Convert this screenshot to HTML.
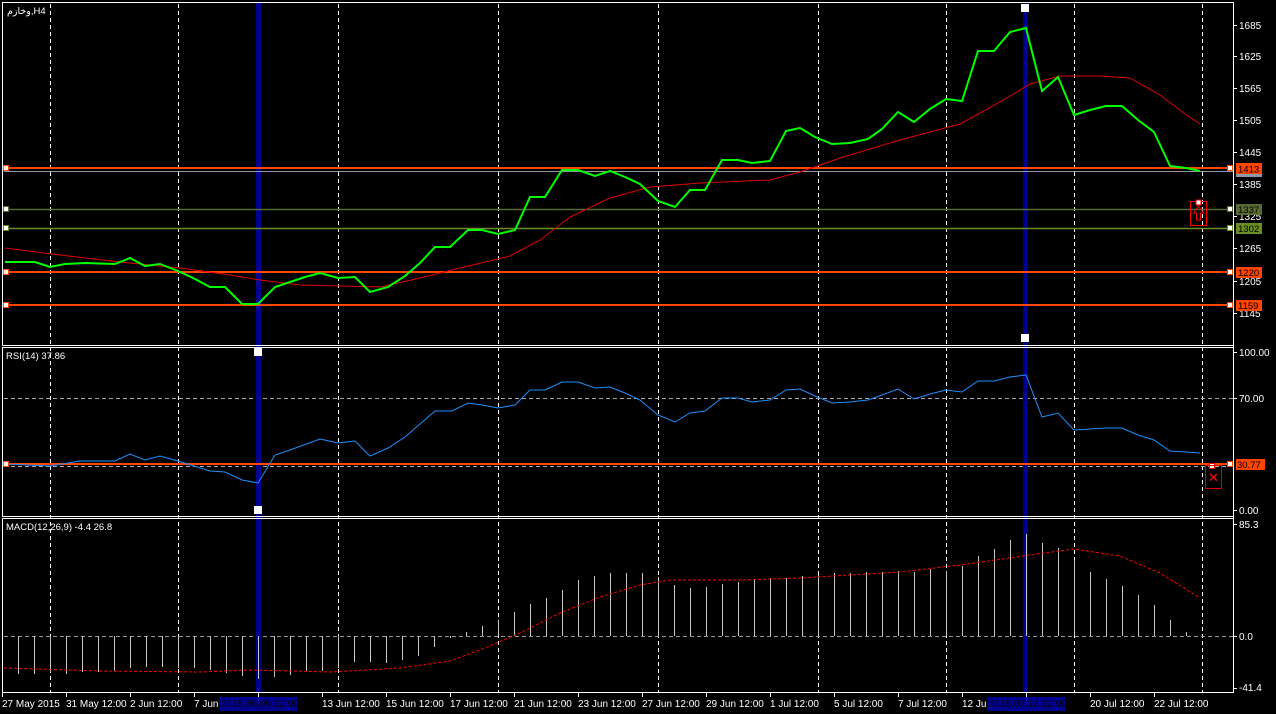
<!DOCTYPE html>
<html><head><meta charset="utf-8"><style>
html,body{margin:0;padding:0;background:#000;width:1276px;height:714px;overflow:hidden}
svg{display:block}
text{font-family:"Liberation Sans","DejaVu Sans",sans-serif;font-size:10px;fill:#fff}
.ax{font-size:10px}
.lb{font-size:9.5px;fill:#000}
</style></head><body>
<svg width="1276" height="714" viewBox="0 0 1276 714">
<rect width="1276" height="714" fill="#000"/>
<!-- vertical grid -->
<g stroke="#fff" stroke-width="1" stroke-dasharray="4,3">
<line x1="50.5" y1="4" x2="50.5" y2="692"/><line x1="178.5" y1="4" x2="178.5" y2="692"/>
<line x1="338.5" y1="4" x2="338.5" y2="692"/><line x1="498.5" y1="4" x2="498.5" y2="692"/>
<line x1="658.5" y1="4" x2="658.5" y2="692"/><line x1="818.5" y1="4" x2="818.5" y2="692"/>
<line x1="946.5" y1="4" x2="946.5" y2="692"/><line x1="1074.5" y1="4" x2="1074.5" y2="692"/>
<line x1="1202.5" y1="4" x2="1202.5" y2="692"/>
</g>
<!-- RSI & MACD horizontal dashed -->
<g stroke="#aaa" stroke-dasharray="4,3">
<line x1="4" y1="398.5" x2="1233" y2="398.5"/>
<line x1="4" y1="466.5" x2="1233" y2="466.5"/>
<line x1="4" y1="636.5" x2="1233" y2="636.5" stroke="#8899aa"/>
</g>
<!-- blue vertical lines -->
<rect x="256" y="3" width="5" height="690" fill="#000090"/>
<rect x="1023" y="3" width="5" height="690" fill="#000090"/>
<!-- pane borders -->
<g fill="none" stroke="#fff" stroke-width="1">
<rect x="2.5" y="2.5" width="1231" height="343"/>
<rect x="2.5" y="347.5" width="1231" height="169"/>
<rect x="2.5" y="518.5" width="1231" height="174"/>
</g>
<!-- horizontal level lines -->
<line x1="4" y1="171.5" x2="1233" y2="171.5" stroke="#8a9aa8" stroke-width="1"/>
<line x1="4" y1="168" x2="1233" y2="168" stroke="#ff4500" stroke-width="2"/>
<line x1="4" y1="209.5" x2="1233" y2="209.5" stroke="#556b2f" stroke-width="1.5"/>
<line x1="4" y1="228.5" x2="1233" y2="228.5" stroke="#6b8e23" stroke-width="1.5"/>
<line x1="4" y1="272" x2="1233" y2="272" stroke="#ff4500" stroke-width="2"/>
<line x1="4" y1="305" x2="1233" y2="305" stroke="#ff4500" stroke-width="2"/>
<line x1="4" y1="464" x2="1233" y2="464" stroke="#ff4500" stroke-width="2"/>
<!-- MA red -->
<polyline fill="none" stroke="#e00000" stroke-width="1" points="5,248 60,255 120,262 180,268 230,275 260,280 300,285 380,287 420,278 460,268 510,256 540,240 570,217 610,198 650,187 700,183 770,180 800,172 840,158 900,140 960,124 1000,102 1030,84 1060,76 1100,76 1130,78 1160,95 1185,114 1200,124"/>
<!-- price green -->
<polyline fill="none" stroke="#00ff00" stroke-width="2" points="5,262 35,262 50,267 65,264 85,263 115,264 130,258 145,266 160,264 178,271 195,279 210,287 225,287 242,304 258,304 275,287 290,282 305,277 320,273 338,278 355,277 370,292 388,287 405,276 420,263 435,247 450,247 468,230 482,230 498,234 515,230 530,197 545,197 562,170 578,170 595,176 610,171 625,177 640,184 658,201 675,207 690,190 705,190 722,160 738,160 752,163 770,161 786,131 800,128 815,137 832,144 850,143 868,139 882,129 898,112 914,122 930,109 946,99 962,101 978,51 994,51 1010,32 1026,28 1042,91 1058,77 1074,115 1090,110 1106,106 1122,106 1138,120 1154,132 1170,166 1186,168 1200,171"/>
<!-- RSI blue -->
<polyline fill="none" stroke="#1e90ff" stroke-width="1" points="5,464 50,466 80,461 115,461 130,454 145,460 160,456 178,461 210,471 225,472 242,480 258,483 275,455 290,450 320,439 338,443 355,441 370,456 388,448 405,437 420,424 435,411 452,411 468,403 482,405 498,408 515,405 530,390 545,390 562,382 578,382 595,388 610,387 625,393 640,400 658,415 675,422 690,413 705,411 722,398 738,398 752,402 770,400 786,390 800,389 815,396 832,403 850,402 868,400 882,395 898,389 914,399 930,394 946,390 962,392 978,381 994,381 1010,377 1026,375 1042,417 1058,413 1074,430 1090,429 1106,428 1122,428 1138,435 1154,440 1170,451 1186,452 1200,453"/>
<!-- MACD bars -->
<g stroke="#c8c8c8" stroke-width="1">
<line x1="18.5" y1="636" x2="18.5" y2="674"/><line x1="34.5" y1="636" x2="34.5" y2="674"/><line x1="50.5" y1="636" x2="50.5" y2="672"/><line x1="66.5" y1="636" x2="66.5" y2="674"/><line x1="82.5" y1="636" x2="82.5" y2="672"/><line x1="98.5" y1="636" x2="98.5" y2="672"/><line x1="114.5" y1="636" x2="114.5" y2="671"/><line x1="130.5" y1="636" x2="130.5" y2="668"/><line x1="146.5" y1="636" x2="146.5" y2="667"/><line x1="162.5" y1="636" x2="162.5" y2="667"/><line x1="178.5" y1="636" x2="178.5" y2="668"/><line x1="194.5" y1="636" x2="194.5" y2="668"/><line x1="210.5" y1="636" x2="210.5" y2="670"/><line x1="226.5" y1="636" x2="226.5" y2="673"/><line x1="242.5" y1="636" x2="242.5" y2="676"/><line x1="258.5" y1="636" x2="258.5" y2="679"/><line x1="274.5" y1="636" x2="274.5" y2="677"/><line x1="290.5" y1="636" x2="290.5" y2="675"/><line x1="306.5" y1="636" x2="306.5" y2="671"/><line x1="322.5" y1="636" x2="322.5" y2="671"/><line x1="338.5" y1="636" x2="338.5" y2="668"/><line x1="354.5" y1="636" x2="354.5" y2="662"/><line x1="370.5" y1="636" x2="370.5" y2="662"/><line x1="386.5" y1="636" x2="386.5" y2="663"/><line x1="402.5" y1="636" x2="402.5" y2="660"/><line x1="418.5" y1="636" x2="418.5" y2="656"/><line x1="434.5" y1="636" x2="434.5" y2="647"/><line x1="450.5" y1="636" x2="450.5" y2="638"/><line x1="466.5" y1="632" x2="466.5" y2="636"/>
<line x1="482.5" y1="626" x2="482.5" y2="636"/><line x1="498.5" y1="620" x2="498.5" y2="636"/><line x1="514.5" y1="612" x2="514.5" y2="636"/><line x1="530.5" y1="604" x2="530.5" y2="636"/><line x1="546.5" y1="598" x2="546.5" y2="636"/><line x1="562.5" y1="590" x2="562.5" y2="636"/><line x1="578.5" y1="580" x2="578.5" y2="636"/><line x1="594.5" y1="576" x2="594.5" y2="636"/><line x1="610.5" y1="573" x2="610.5" y2="636"/><line x1="626.5" y1="573" x2="626.5" y2="636"/><line x1="642.5" y1="573" x2="642.5" y2="636"/><line x1="658.5" y1="577" x2="658.5" y2="636"/><line x1="674.5" y1="585" x2="674.5" y2="636"/><line x1="690.5" y1="588" x2="690.5" y2="636"/><line x1="706.5" y1="587" x2="706.5" y2="636"/><line x1="722.5" y1="584" x2="722.5" y2="636"/><line x1="738.5" y1="582" x2="738.5" y2="636"/><line x1="754.5" y1="579" x2="754.5" y2="636"/><line x1="770.5" y1="578" x2="770.5" y2="636"/><line x1="786.5" y1="578" x2="786.5" y2="636"/><line x1="802.5" y1="576" x2="802.5" y2="636"/><line x1="818.5" y1="575" x2="818.5" y2="636"/><line x1="834.5" y1="573" x2="834.5" y2="636"/><line x1="850.5" y1="573" x2="850.5" y2="636"/><line x1="866.5" y1="572" x2="866.5" y2="636"/><line x1="882.5" y1="572" x2="882.5" y2="636"/><line x1="898.5" y1="571" x2="898.5" y2="636"/>
<line x1="914.5" y1="572" x2="914.5" y2="636"/><line x1="930.5" y1="569" x2="930.5" y2="636"/><line x1="946.5" y1="571" x2="946.5" y2="636"/><line x1="962.5" y1="566" x2="962.5" y2="636"/><line x1="978.5" y1="556" x2="978.5" y2="636"/><line x1="994.5" y1="549" x2="994.5" y2="636"/><line x1="1010.5" y1="540" x2="1010.5" y2="636"/><line x1="1026.5" y1="534" x2="1026.5" y2="636"/><line x1="1042.5" y1="543" x2="1042.5" y2="636"/><line x1="1058.5" y1="548" x2="1058.5" y2="636"/><line x1="1074.5" y1="560" x2="1074.5" y2="636"/><line x1="1090.5" y1="572" x2="1090.5" y2="636"/><line x1="1106.5" y1="579" x2="1106.5" y2="636"/><line x1="1122.5" y1="586" x2="1122.5" y2="636"/><line x1="1138.5" y1="595" x2="1138.5" y2="636"/><line x1="1154.5" y1="605" x2="1154.5" y2="636"/><line x1="1170.5" y1="620" x2="1170.5" y2="636"/><line x1="1186.5" y1="632" x2="1186.5" y2="636"/>
</g>
<!-- MACD signal -->
<polyline fill="none" stroke="#ff0000" stroke-width="1" stroke-dasharray="3,2" points="4,668 100,671 200,672 250,670 330,672 400,668 450,661 480,650 520,633 560,613 600,597 640,585 670,580 740,580 800,578 900,572 960,565 1030,555 1074,549 1120,556 1160,573 1200,598"/>
<!-- handles -->
<g fill="#fff" stroke="#ff4500" stroke-width="1">
<rect x="3.5" y="165.5" width="5" height="5"/><rect x="1227.5" y="165.5" width="5" height="5"/>
<rect x="3.5" y="206.5" width="5" height="5" stroke="#556b2f"/><rect x="1227.5" y="206.5" width="5" height="5" stroke="#556b2f"/>
<rect x="3.5" y="225.5" width="5" height="5" stroke="#6b8e23"/><rect x="1227.5" y="225.5" width="5" height="5" stroke="#6b8e23"/>
<rect x="3.5" y="269.5" width="5" height="5"/><rect x="1227.5" y="269.5" width="5" height="5"/>
<rect x="3.5" y="302.5" width="5" height="5"/><rect x="1227.5" y="302.5" width="5" height="5"/>
<rect x="3.5" y="461.5" width="5" height="5"/><rect x="1227.5" y="461.5" width="5" height="5"/>
<rect x="1209.5" y="463.5" width="5" height="5" stroke="#ff0000"/>
</g>
<g fill="#fff">
<rect x="1021" y="4" width="8" height="8"/><rect x="1021" y="334" width="8" height="8"/>
<rect x="254" y="348" width="8" height="8"/><rect x="254" y="506" width="8" height="8"/>
</g>
<!-- arrow object -->
<rect x="1190.5" y="201.5" width="16" height="24" fill="none" stroke="#f00"/>
<path d="M1198.5 206 L1203.5 213 L1200.5 213 L1200.5 220 L1196.5 220 L1196.5 213 L1193.5 213 Z" fill="none" stroke="#f00"/>
<rect x="1196" y="200" width="5" height="5" fill="#fff" stroke="#f00"/>
<rect x="1205.5" y="465.5" width="16" height="23" fill="none" stroke="#d00"/>
<text x="1208" y="482" style="font-size:13px;font-weight:bold;fill:#ff1010">✕</text>
<!-- right axis -->
<line x1="1233.5" y1="2" x2="1233.5" y2="693" stroke="#fff"/>
<g stroke="#fff">
<line x1="1233" y1="25.5" x2="1237" y2="25.5"/><line x1="1233" y1="56.5" x2="1237" y2="56.5"/><line x1="1233" y1="88.5" x2="1237" y2="88.5"/><line x1="1233" y1="120.5" x2="1237" y2="120.5"/><line x1="1233" y1="152.5" x2="1237" y2="152.5"/><line x1="1233" y1="184.5" x2="1237" y2="184.5"/><line x1="1233" y1="216.5" x2="1237" y2="216.5"/><line x1="1233" y1="248.5" x2="1237" y2="248.5"/><line x1="1233" y1="281.5" x2="1237" y2="281.5"/><line x1="1233" y1="313.5" x2="1237" y2="313.5"/>
<line x1="1233" y1="352.5" x2="1237" y2="352.5"/><line x1="1233" y1="398.5" x2="1237" y2="398.5"/><line x1="1233" y1="510.5" x2="1237" y2="510.5"/><line x1="1233" y1="524.5" x2="1237" y2="524.5"/><line x1="1233" y1="636.5" x2="1237" y2="636.5"/><line x1="1233" y1="688.5" x2="1237" y2="688.5"/>
</g>
<g class="ax">
<text x="1239" y="29">1685</text><text x="1239" y="60">1625</text><text x="1239" y="92">1565</text><text x="1239" y="124">1505</text><text x="1239" y="156">1445</text><text x="1239" y="188">1385</text><text x="1239" y="220">1325</text><text x="1239" y="252">1265</text><text x="1239" y="285">1205</text><text x="1239" y="317">1145</text>
<text x="1239" y="356">100.00</text><text x="1239" y="402">70.00</text><text x="1239" y="514">0.00</text>
<text x="1239" y="528">85.3</text><text x="1239" y="640">0.0</text><text x="1239" y="691">-41.4</text>
</g>
<!-- price labels -->
<rect x="1236" y="163" width="26" height="12" fill="#ff4500"/><rect x="1236" y="174" width="26" height="3" fill="#8a9aa8"/><text class="lb" x="1238" y="172.5">1413</text>
<rect x="1236" y="204" width="26" height="11" fill="#556b2f"/><text class="lb" x="1238" y="213">1337</text>
<rect x="1236" y="223" width="26" height="11" fill="#6b8e23"/><text class="lb" x="1238" y="232">1302</text>
<rect x="1236" y="267" width="26" height="11" fill="#ff4500"/><text class="lb" x="1238" y="276">1220</text>
<rect x="1236" y="300" width="26" height="11" fill="#ff4500"/><text class="lb" x="1238" y="309">1159</text>
<rect x="1236" y="459" width="29" height="11" fill="#ff4500"/><text class="lb" x="1237" y="468">30.77</text>
<!-- pane titles -->
<text x="7" y="14" style="font-size:9.5px">وخازم,H4</text>
<text x="6" y="359" style="font-size:9.5px">RSI(14) 37.86</text>
<text x="6" y="530" style="font-size:9.5px">MACD(12,26,9) -4.4 26.8</text>
<!-- time axis -->
<g stroke="#fff">
<line x1="2.5" y1="693" x2="2.5" y2="697"/><line x1="66.5" y1="693" x2="66.5" y2="697"/><line x1="130.5" y1="693" x2="130.5" y2="697"/><line x1="194.5" y1="693" x2="194.5" y2="697"/><line x1="258.5" y1="693" x2="258.5" y2="697"/><line x1="322.5" y1="693" x2="322.5" y2="697"/><line x1="386.5" y1="693" x2="386.5" y2="697"/><line x1="450.5" y1="693" x2="450.5" y2="697"/><line x1="514.5" y1="693" x2="514.5" y2="697"/><line x1="578.5" y1="693" x2="578.5" y2="697"/><line x1="642.5" y1="693" x2="642.5" y2="697"/><line x1="706.5" y1="693" x2="706.5" y2="697"/><line x1="770.5" y1="693" x2="770.5" y2="697"/><line x1="834.5" y1="693" x2="834.5" y2="697"/><line x1="898.5" y1="693" x2="898.5" y2="697"/><line x1="962.5" y1="693" x2="962.5" y2="697"/><line x1="1026.5" y1="693" x2="1026.5" y2="697"/><line x1="1090.5" y1="693" x2="1090.5" y2="697"/><line x1="1154.5" y1="693" x2="1154.5" y2="697"/>
</g>
<g class="ax">
<text x="2" y="707">27 May 2015</text><text x="66" y="707">31 May 12:00</text><text x="130" y="707">2 Jun 12:00</text><text x="194" y="707">7 Jun 12:00</text>
<text x="322" y="707">13 Jun 12:00</text><text x="386" y="707">15 Jun 12:00</text><text x="450" y="707">17 Jun 12:00</text><text x="514" y="707">21 Jun 12:00</text><text x="578" y="707">23 Jun 12:00</text><text x="642" y="707">27 Jun 12:00</text><text x="706" y="707">29 Jun 12:00</text><text x="770" y="707">1 Jul 12:00</text><text x="834" y="707">5 Jul 12:00</text><text x="898" y="707">7 Jul 12:00</text><text x="962" y="707">12 Jul 12:00</text><text x="1090" y="707">20 Jul 12:00</text><text x="1154" y="707">22 Jul 12:00</text>
</g>
<rect x="219" y="697" width="78" height="14" fill="#000090"/>
<text class="ax" x="221" y="707" style="fill:#000">2015.06.09 12:00</text>
<rect x="987" y="697" width="78" height="14" fill="#000090"/>
<text class="ax" x="989" y="707" style="fill:#000">2015.07.14 12:00</text>
</svg>
</body></html>
